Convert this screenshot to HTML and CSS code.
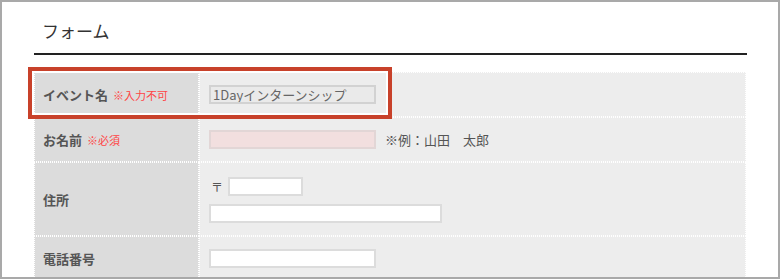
FILE: index.html
```html
<!DOCTYPE html>
<html lang="ja">
<head>
    <meta charset="UTF-8">
    <meta name="viewport" content="width=device-width, initial-scale=1.0">
    <title>フォーム</title>
    <link rel="stylesheet" href="styles.css">
</head>
<body>
    <div class="frame">
        <div class="form-box">
            <h2 class="form-title">フォーム</h2>

            <div class="table-wrap">
                <table class="form-table">
                    <tr>
                        <th>イベント名 <span class="note">※入力不可</span></th>
                        <td><input type="text" class="input input-locked" value="1Dayインターンシップ" readonly></td>
                    </tr>
                    <tr>
                        <th>お名前 <span class="note">※必須</span></th>
                        <td>
                            <input type="text" class="input input-required">
                            <span class="example">※例：山田　太郎</span>
                        </td>
                    </tr>
                    <tr>
                        <th>住所</th>
                        <td class="address">
                            <div class="zip-row">
                                <span class="zip-mark">〒</span>
                                <input type="text" class="input input-zip">
                            </div>
                            <input type="text" class="input input-wide">
                        </td>
                    </tr>
                    <tr>
                        <th>電話番号</th>
                        <td><input type="text" class="input"></td>
                    </tr>
                </table>

                <!-- 注目枠（注釈） -->
                <div class="highlight"></div>
            </div>
        </div>
    </div>
</body>
</html>
```

FILE: styles.css
```css
body {
    margin: 0;
    padding: 0;
    font-family: 'Noto Sans CJK JP', 'Liberation Sans', sans-serif;
    background-color: #fff;
    color: #555;
}

.frame {
    width: 780px;
    height: 279px;
    box-sizing: border-box;
    border: 2px solid #a9a9a9;
    overflow: hidden;
}

.form-box {
    width: 713px;
    margin-left: 32px;
}

.form-title {
    margin: 0;
    padding: 17px 8px 10px;
    font-size: 17px;
    line-height: 24px;
    font-weight: normal;
    color: #333;
    border-bottom: 2px solid #222;
}

.table-wrap {
    position: relative;
    margin-top: 17px;
}

.form-table {
    width: 712px;
    border-collapse: separate;
    border-spacing: 0;
    table-layout: fixed;
}

.form-table th,
.form-table td {
    border: 1px dotted #fff;
    vertical-align: middle;
    font-size: 13px;
    line-height: 19px;
}

.form-table th {
    width: 147px;
    padding: 0 8px;
    background-color: #dcdcdc;
    text-align: left;
    font-weight: bold;
    color: #555;
    white-space: nowrap;
}

.form-table td {
    padding: 12px 9px;
    background-color: #ededed;
}

.note {
    margin-left: 2px;
    font-size: 11px;
    font-weight: normal;
    color: #f44;
}

.input {
    width: 167px;
    height: 19px;
    box-sizing: border-box;
    margin: 0;
    padding: 0 2px;
    border: 2px solid #dcdcdc;
    background-color: #fff;
    font-family: inherit;
    font-size: 13px;
    line-height: 15px;
    color: #666;
    vertical-align: top;
}

.input-locked {
    background-color: #eaeaea;
    border-color: #d2d2d2;
}

.input-required {
    background-color: #f2dfdf;
    border-color: #e2d6d6;
}

.example {
    margin-left: 6px;
    color: #555;
}

.form-table td.address {
    padding: 14px 9px 12px;
}

.zip-row {
    display: flex;
    align-items: center;
    margin-bottom: 8px;
}

.zip-mark {
    width: 17px;
    padding-left: 2px;
    font-size: 12px;
}

.input-zip {
    width: 75px;
}

.input-wide {
    display: block;
    width: 233px;
}

.highlight {
    position: absolute;
    left: -6px;
    top: -5px;
    width: 364px;
    height: 52px;
    box-sizing: border-box;
    border: 4px solid #c8412a;
    box-shadow: inset 0 0 0 2px #fff;
    pointer-events: none;
}
```
